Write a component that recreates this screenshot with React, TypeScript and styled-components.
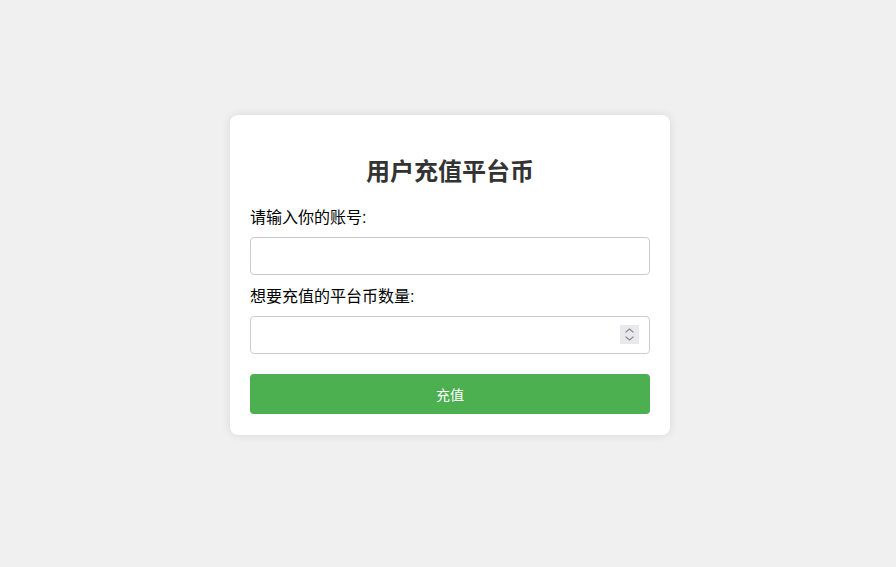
import React from "react";
import styled, { createGlobalStyle } from "styled-components";

const GlobalStyle = createGlobalStyle`
  html, body {
    margin: 0;
    padding: 0;
  }
  body {
    background: #f0f0f0;
    font-family: "Liberation Sans", "Noto Sans CJK SC", sans-serif;
  }
`;

const Page = styled.div`
  display: flex;
  justify-content: center;
  align-items: flex-start;
  min-height: 100vh;
  padding: 115px 0 0 4px;
  box-sizing: border-box;
`;

const Card = styled.div`
  width: 400px;
  padding: 20px 20px 21px;
  background: #fff;
  border-radius: 8px;
  box-shadow: 0 0 10px rgba(0, 0, 0, 0.1);
`;

const Title = styled.h2`
  margin: 20px 0 18px;
  font-size: 24px;
  line-height: 34px;
  font-weight: bold;
  text-align: center;
  color: #333;
`;

const Label = styled.label`
  display: block;
  font-size: 16px;
  line-height: 22px;
  color: #000;
  margin-bottom: 8px;
`;

const FieldWrap = styled.div<{ $last?: boolean }>`
  position: relative;
  margin-bottom: ${(p) => (p.$last ? "20px" : "11px")};
`;

const Field = styled.input`
  display: block;
  width: 100%;
  box-sizing: border-box;
  height: 38px;
  padding: 10px;
  font-size: 16px;
  font-family: inherit;
  border: 1px solid #ccc;
  border-radius: 4px;
  outline: none;
  -moz-appearance: textfield;

  &::-webkit-inner-spin-button,
  &::-webkit-outer-spin-button {
    -webkit-appearance: none;
    margin: 0;
  }
`;

const Spinner = styled.div`
  position: absolute;
  right: 11px;
  top: 9px;
  width: 19px;
  height: 19px;
  background: #e9e9ed;
  display: flex;
  flex-direction: column;
  align-items: center;
  justify-content: center;
  gap: 3px;
  pointer-events: none;
`;

const Submit = styled.button`
  display: block;
  width: 100%;
  height: 40px;
  border: none;
  border-radius: 4px;
  background: #4caf50;
  color: #fff;
  font-size: 14px;
  font-family: inherit;
  cursor: pointer;
`;

const Chevron = ({ down }: { down?: boolean }) => (
  <svg width="9" height="5" viewBox="0 0 9 5" fill="none">
    <path
      d={down ? "M1 1 L4.5 4 L8 1" : "M1 4 L4.5 1 L8 4"}
      stroke="#8a8a8f"
      strokeWidth="1.2"
      strokeLinecap="round"
      strokeLinejoin="round"
    />
  </svg>
);

export default function App() {
  return (
    <>
      <GlobalStyle />
      <Page>
        <Card>
          <Title>用户充值平台币</Title>
          <form onSubmit={(e) => e.preventDefault()}>
            <Label htmlFor="account">请输入你的账号:</Label>
            <FieldWrap>
              <Field id="account" type="text" />
            </FieldWrap>
            <Label htmlFor="amount">想要充值的平台币数量:</Label>
            <FieldWrap $last>
              <Field id="amount" type="number" />
              <Spinner>
                <Chevron />
                <Chevron down />
              </Spinner>
            </FieldWrap>
            <Submit type="submit">充值</Submit>
          </form>
        </Card>
      </Page>
    </>
  );
}
